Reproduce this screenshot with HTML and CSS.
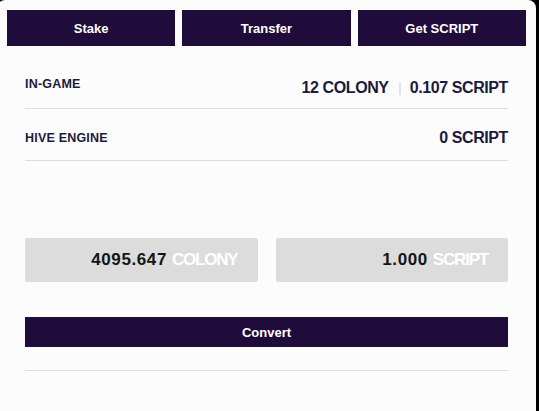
FILE: index.html
```html
<!DOCTYPE html>
<html>
<head>
<meta charset="utf-8">
<link rel="stylesheet" href="styles.css">
</head>
<body>
<div class="card">
  <div class="actions">
    <button class="btn">Stake</button>
    <button class="btn">Transfer</button>
    <button class="btn">Get SCRIPT</button>
  </div>
  <div class="content">
    <div class="row row-first">
      <span class="label">IN-GAME</span>
      <span class="value value-low">12 COLONY<span class="sep"></span>0.107 SCRIPT</span>
    </div>
    <div class="row">
      <span class="label">HIVE ENGINE</span>
      <span class="value">0 SCRIPT</span>
    </div>
    <div class="inputs">
      <div class="field"><span class="num">4095.647</span><span class="unit">COLONY</span></div>
      <div class="field"><span class="num">1.000</span><span class="unit">SCRIPT</span></div>
    </div>
    <button class="convert">Convert</button>
    <div class="rule"></div>
  </div>
</div>
</body>
</html>
```
FILE: styles.css
```css
html, body {
  margin: 0;
  padding: 0;
  background: #000;
  height: 100%;
  overflow: hidden;
}
body {
  font-family: "Liberation Sans", Arial, sans-serif;
}
.card {
  margin-left: -3px;
  width: 539px;
  height: 420px;
  background: #fcfcfc;
  border-radius: 8px;
  box-sizing: border-box;
  padding: 10px 10px 0;
}
.actions {
  display: grid;
  grid-template-columns: 1fr 1fr 1fr;
  gap: 7px;
}
.btn, .convert {
  background: #1f0c3a;
  color: #fff;
  border: 0;
  font-family: "Liberation Sans", Arial, sans-serif;
  font-weight: bold;
  font-size: 13px;
  padding: 0;
  margin: 0;
  cursor: pointer;
}
.btn {
  height: 36px;
}
.content {
  padding: 0 18px;
}
.row {
  display: flex;
  justify-content: space-between;
  align-items: flex-start;
  padding: 21px 0 14px;
  border-bottom: 1px solid #dedede;
  color: #1c1a3c;
}
.row-first {
  margin-top: 12px;
  padding: 18px 0 12px;
}
.label {
  font-size: 12.5px;
  line-height: 16px;
  font-weight: bold;
  letter-spacing: 0.2px;
}
.value {
  font-size: 16px;
  line-height: 16px;
  font-weight: bold;
  letter-spacing: -0.4px;
  display: flex;
  align-items: center;
}
.value-low {
  margin-top: 4px;
}
.sep {
  display: inline-block;
  width: 2px;
  height: 13px;
  background: #dfe4ef;
  margin: 0 9px 0 10px;
}
.inputs {
  display: grid;
  grid-template-columns: 1fr 1fr;
  gap: 18px;
  margin-top: 77px;
}
.field {
  height: 44px;
  background: #dcdcdc;
  border-radius: 2px;
  display: flex;
  align-items: center;
  justify-content: flex-end;
  padding: 0 20px;
  font-size: 17px;
  font-weight: bold;
}
.num {
  color: #141414;
  letter-spacing: 0.6px;
}
.unit {
  color: #fff;
  letter-spacing: -1.2px;
  margin-left: 5px;
}
.convert {
  display: block;
  width: 100%;
  height: 30px;
  margin-top: 35px;
}
.rule {
  margin-top: 23px;
  border-top: 1px solid #dedede;
}
```
